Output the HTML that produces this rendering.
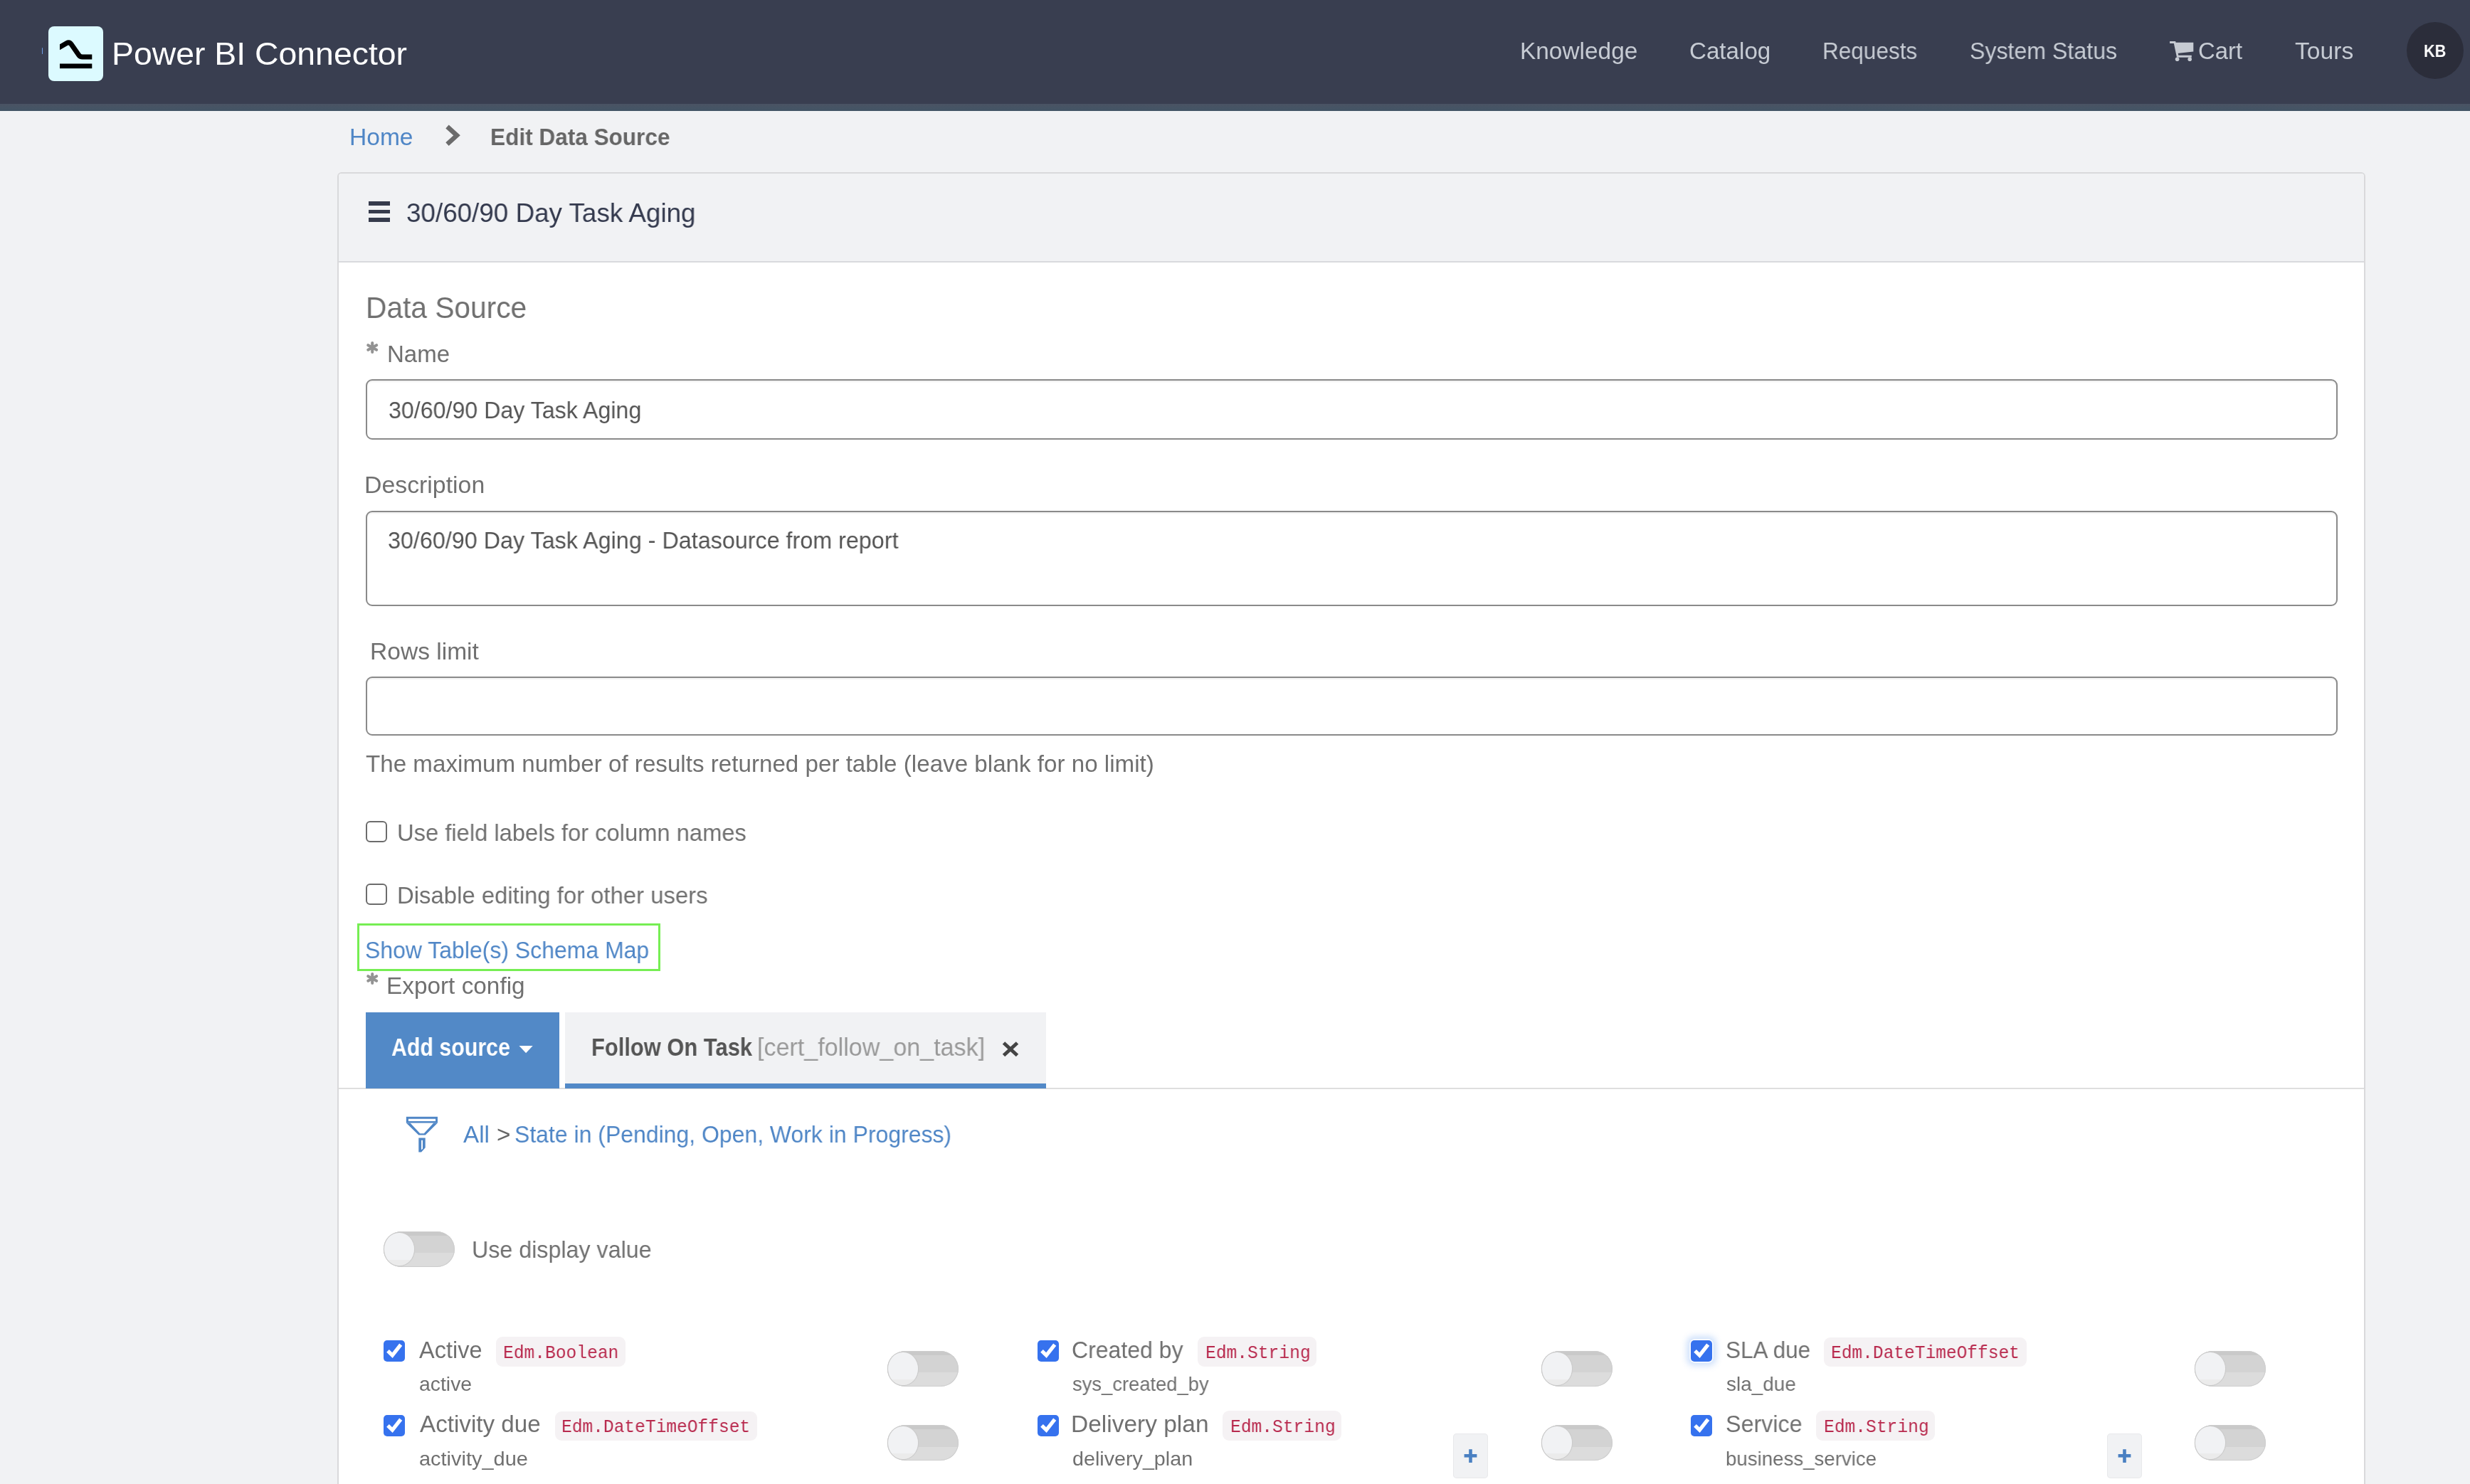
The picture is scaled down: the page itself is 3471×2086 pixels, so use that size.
<!DOCTYPE html><html><head><meta charset="utf-8"><style>
html,body{margin:0;padding:0;width:3471px;height:2086px;overflow:hidden;background:#f1f2f4;font-family:'Liberation Sans',sans-serif}
div,span,svg{position:absolute;box-sizing:border-box}
.t{white-space:nowrap;transform-origin:0 0;will-change:transform}
.tg{width:100px;height:50px;border-radius:25px;background:linear-gradient(#c9c9c9 0,#c9c9c9 12%,#d3d3d3 12%,#d3d3d3 61%,#dcdcdc 61%);box-shadow:inset 0 0 0 1px #cdcdcd}
.kn{left:1px;top:1.8px;width:41.5px;height:46.5px;border-radius:50%;background:linear-gradient(#f1f2f4 0,#f1f2f4 83%,#ebebeb 83%);box-shadow:0 0 0 1.2px #cbcbcb}
.cb{width:30px;height:30px;border-radius:5px;background:#3672ee}
.bd{height:41.5px;border-radius:9px;background:#f5f2f4}
.pl{width:49px;height:62.5px;border-radius:5px;background:#f1f2f4;box-shadow:inset 0 0 0 1px #e8e9eb}
</style></head><body>
<div style="left:0px;top:0px;width:3471px;height:146px;background:#393e50"></div>
<div style="left:0px;top:146px;width:3471px;height:10px;background:linear-gradient(#4a5363,#435566)"></div>
<div style="left:68px;top:37px;width:77px;height:77px;background:#dcfaff;border-radius:8px"></div>
<svg style="left:68px;top:37px" width="77" height="77" viewBox="0 0 77 77"><defs><clipPath id="lc"><rect x="16" y="0" width="45.3" height="77"/></clipPath></defs><path clip-path="url(#lc)" d="M8,33.9 L25.5,23.8 Q29.5,21.5 32.2,25.3 L42.6,40.3 Q44.5,43.1 48,43.1 L62,43.1" fill="none" stroke="#000" stroke-width="7"/><rect x="16" y="52.5" width="45.3" height="6.7" fill="#000"/></svg>
<div style="left:58.6px;top:66.5px;width:1.6px;height:9px;background:#6f9fe6;border-radius:1px"></div>
<div style="left:3382px;top:31px;width:80px;height:80px;background:#2b2d3a;border-radius:50%"></div>
<svg style="left:3044px;top:52px" width="44" height="40" viewBox="0 0 44 40"><polyline points="5.1,7.5 12,7.5 16.2,27.3 35.8,27.3" fill="none" stroke="#c6cbd3" stroke-width="2.9"/><polygon points="12.6,7.8 38.3,7.8 38.3,20.5 15.8,22.9" fill="#c6cbd3"/><circle cx="15.6" cy="31.3" r="2.8" fill="#c6cbd3"/><circle cx="33.2" cy="31.3" r="2.8" fill="#c6cbd3"/></svg>
<svg style="left:620px;top:170px" width="32" height="42" viewBox="0 0 32 42"><polyline points="8.5,8 22,20.3 8.5,32.6" fill="none" stroke="#6b6b6b" stroke-width="6.5" stroke-linejoin="miter" stroke-miterlimit="3"/></svg>
<div style="left:474px;top:242px;width:2850px;height:1900px;background:#fff;border:2px solid #d9d9db;border-radius:6px"></div>
<div style="left:476px;top:244px;width:2846px;height:123px;background:#f1f2f4;border-radius:4px 4px 0 0"></div>
<div style="left:476px;top:367px;width:2846px;height:2px;background:#d9dadd"></div>
<div style="left:518px;top:283px;width:29.5px;height:5.6px;background:#363b4c"></div>
<div style="left:518px;top:294.6px;width:29.5px;height:5.6px;background:#363b4c"></div>
<div style="left:518px;top:306.3px;width:29.5px;height:5.6px;background:#363b4c"></div>
<div style="left:514px;top:533px;width:2771px;height:85px;background:#fff;border:2px solid #8a8a8a;border-radius:9px;box-shadow:inset 0 2px 2px rgba(0,0,0,.055)"></div>
<div style="left:514px;top:718px;width:2771px;height:133.5px;background:#fff;border:2px solid #8a8a8a;border-radius:9px;box-shadow:inset 0 2px 2px rgba(0,0,0,.055)"></div>
<div style="left:514px;top:951px;width:2771px;height:83px;background:#fff;border:2px solid #8a8a8a;border-radius:9px;box-shadow:inset 0 2px 2px rgba(0,0,0,.055)"></div>
<div style="left:514px;top:1154px;width:30px;height:30px;border:2.6px solid #6c6c6c;border-radius:6px;background:#fff"></div>
<div style="left:514px;top:1242px;width:30px;height:30px;border:2.6px solid #6c6c6c;border-radius:6px;background:#fff"></div>
<svg style="left:514.6px;top:480px" width="17" height="17" viewBox="0 0 17 17"><g stroke="#939393" stroke-width="4" stroke-linecap="round"><line x1="8.2" y1="2" x2="8.2" y2="15"/><line x1="2.3" y1="5.2" x2="14.1" y2="11.8"/><line x1="2.3" y1="11.8" x2="14.1" y2="5.2"/></g></svg>
<svg style="left:514.6px;top:1366.5px" width="17" height="17" viewBox="0 0 17 17"><g stroke="#939393" stroke-width="4" stroke-linecap="round"><line x1="8.2" y1="2" x2="8.2" y2="15"/><line x1="2.3" y1="5.2" x2="14.1" y2="11.8"/><line x1="2.3" y1="11.8" x2="14.1" y2="5.2"/></g></svg>
<div style="left:502px;top:1298px;width:426px;height:67px;border:3px solid #76ee53"></div>
<div style="left:476px;top:1528.5px;width:2846px;height:2px;background:#dedede"></div>
<div style="left:514px;top:1423px;width:272px;height:107px;background:#5289c7"></div>
<svg style="left:728px;top:1469px" width="22" height="13" viewBox="0 0 22 13"><polygon points="1.5,1 20.7,1 11.1,11.3" fill="#fff"/></svg>
<div style="left:794px;top:1423px;width:676px;height:107px;background:#f1f2f4"></div>
<div style="left:794px;top:1523px;width:676px;height:7px;background:#5289c7"></div>
<svg style="left:1405px;top:1461px" width="30" height="28" viewBox="0 0 30 28"><g stroke="#444" stroke-width="5"><line x1="5.5" y1="5" x2="24.5" y2="22.5"/><line x1="24.5" y1="5" x2="5.5" y2="22.5"/></g></svg>
<svg style="left:560px;top:1560px" width="80" height="70" viewBox="0 0 80 70"><path fill="#4f86c6" fill-rule="evenodd" d="M10.85,9.7 H54.95 V18.6 H10.85 Z M13.9,12.7 H52.1 V16 H13.9 Z"/><path fill="#4f86c6" fill-rule="evenodd" d="M10.85,18.6 L28.3,35.6 H37.7 L54.95,18.6 Z M16.5,18.6 L30.2,33.3 H35.8 L49.3,18.6 Z"/><path fill="#4f86c6" fill-rule="evenodd" d="M28.3,39.6 H37.7 V53.3 L32.1,59.4 H28.3 Z M32.1,42.7 H34 V54.7 L32.1,56.3 Z"/></svg>
<div class="tg" style="left:539px;top:1731px"><div class="kn"></div></div>
<div class="cb" style="left:539px;top:1884.2px;"><svg style="left:0;top:0" width="30" height="30" viewBox="0 0 30 30"><polyline points="6,14.8 12.4,21.2 24.2,6.2" fill="none" stroke="#fff" stroke-width="5.2"/></svg></div>
<div class="cb" style="left:539px;top:1989.2px;"><svg style="left:0;top:0" width="30" height="30" viewBox="0 0 30 30"><polyline points="6,14.8 12.4,21.2 24.2,6.2" fill="none" stroke="#fff" stroke-width="5.2"/></svg></div>
<div class="cb" style="left:1458px;top:1884.2px;"><svg style="left:0;top:0" width="30" height="30" viewBox="0 0 30 30"><polyline points="6,14.8 12.4,21.2 24.2,6.2" fill="none" stroke="#fff" stroke-width="5.2"/></svg></div>
<div class="cb" style="left:1458px;top:1989.2px;"><svg style="left:0;top:0" width="30" height="30" viewBox="0 0 30 30"><polyline points="6,14.8 12.4,21.2 24.2,6.2" fill="none" stroke="#fff" stroke-width="5.2"/></svg></div>
<div class="cb" style="left:2376px;top:1884.2px;box-shadow:0 0 0 1.5px #fff,0 0 9px 6px rgba(90,150,240,.28);"><svg style="left:0;top:0" width="30" height="30" viewBox="0 0 30 30"><polyline points="6,14.8 12.4,21.2 24.2,6.2" fill="none" stroke="#fff" stroke-width="5.2"/></svg></div>
<div class="cb" style="left:2376px;top:1989.2px;"><svg style="left:0;top:0" width="30" height="30" viewBox="0 0 30 30"><polyline points="6,14.8 12.4,21.2 24.2,6.2" fill="none" stroke="#fff" stroke-width="5.2"/></svg></div>
<div class="tg" style="left:1247px;top:1899px"><div class="kn"></div></div>
<div class="tg" style="left:1247px;top:2003px"><div class="kn"></div></div>
<div class="tg" style="left:2166px;top:1899px"><div class="kn"></div></div>
<div class="tg" style="left:2166px;top:2003px"><div class="kn"></div></div>
<div class="tg" style="left:3084px;top:1899px"><div class="kn"></div></div>
<div class="tg" style="left:3084px;top:2003px"><div class="kn"></div></div>
<div class="bd" style="left:697px;top:1879.2px;width:181.5px"></div>
<div class="bd" style="left:779.5px;top:1983.5px;width:284px"></div>
<div class="bd" style="left:1683px;top:1879.2px;width:166.5px"></div>
<div class="bd" style="left:1718px;top:1983.2px;width:167px"></div>
<div class="bd" style="left:2563px;top:1879.5px;width:285px"></div>
<div class="bd" style="left:2552px;top:1983.2px;width:166.5px"></div>
<div class="pl" style="left:2042px;top:2015px"><svg style="left:0;top:0" width="49" height="62" viewBox="0 0 49 62"><g stroke="#4a80c2" stroke-width="4.6"><line x1="15.6" y1="31.3" x2="33.4" y2="31.3"/><line x1="24.5" y1="22.2" x2="24.5" y2="41"/></g></svg></div>
<div class="pl" style="left:2961px;top:2015px"><svg style="left:0;top:0" width="49" height="62" viewBox="0 0 49 62"><g stroke="#4a80c2" stroke-width="4.6"><line x1="15.6" y1="31.3" x2="33.4" y2="31.3"/><line x1="24.5" y1="22.2" x2="24.5" y2="41"/></g></svg></div>
<div class="t" style="left:156.79px;top:54.00px;font-family:'Liberation Sans', sans-serif;font-size:44.096px;line-height:44.096px;font-weight:400;color:#ffffff;transform:scaleX(1.0521)">Power BI Connector</div>
<div class="t" style="left:2135.55px;top:56.00px;font-family:'Liberation Sans', sans-serif;font-size:32.929px;line-height:32.929px;font-weight:400;color:#c6cbd3;transform:scaleX(1.0152)">Knowledge</div>
<div class="t" style="left:2374.19px;top:56.00px;font-family:'Liberation Sans', sans-serif;font-size:32.929px;line-height:32.929px;font-weight:400;color:#c6cbd3;transform:scaleX(1.0073)">Catalog</div>
<div class="t" style="left:2560.82px;top:56.00px;font-family:'Liberation Sans', sans-serif;font-size:32.929px;line-height:32.929px;font-weight:400;color:#c6cbd3;transform:scaleX(0.9585)">Requests</div>
<div class="t" style="left:2768.25px;top:56.00px;font-family:'Liberation Sans', sans-serif;font-size:32.929px;line-height:32.929px;font-weight:400;color:#c6cbd3;transform:scaleX(0.9761)">System Status</div>
<div class="t" style="left:3088.61px;top:56.00px;font-family:'Liberation Sans', sans-serif;font-size:32.929px;line-height:32.929px;font-weight:400;color:#c6cbd3;transform:scaleX(0.9950)">Cart</div>
<div class="t" style="left:3225.38px;top:56.00px;font-family:'Liberation Sans', sans-serif;font-size:32.929px;line-height:32.929px;font-weight:400;color:#c6cbd3;transform:scaleX(1.0218)">Tours</div>
<div class="t" style="left:3406.13px;top:61.00px;font-family:'Liberation Sans', sans-serif;font-size:23.193px;line-height:23.193px;font-weight:700;color:#ffffff;transform:scaleX(0.9333)">KB</div>
<div class="t" style="left:490.77px;top:176.00px;font-family:'Liberation Sans', sans-serif;font-size:33.215px;line-height:33.215px;font-weight:400;color:#4f86c6;transform:scaleX(1.0107)">Home</div>
<div class="t" style="left:689.30px;top:176.00px;font-family:'Liberation Sans', sans-serif;font-size:33.215px;line-height:33.215px;font-weight:700;color:#666666;transform:scaleX(0.9502)">Edit Data Source</div>
<div class="t" style="left:571.04px;top:281.00px;font-family:'Liberation Sans', sans-serif;font-size:37.510px;line-height:37.510px;font-weight:400;color:#343a4e;transform:scaleX(0.9815)">30/60/90 Day Task Aging</div>
<div class="t" style="left:514.08px;top:412.00px;font-family:'Liberation Sans', sans-serif;font-size:41.805px;line-height:41.805px;font-weight:400;color:#707070;transform:scaleX(0.9736)">Data Source</div>
<div class="t" style="left:543.55px;top:482.00px;font-family:'Liberation Sans', sans-serif;font-size:32.499px;line-height:32.499px;font-weight:400;color:#707070;transform:scaleX(1.0171)">Name</div>
<div class="t" style="left:545.82px;top:561.00px;font-family:'Liberation Sans', sans-serif;font-size:32.929px;line-height:32.929px;font-weight:400;color:#555555;transform:scaleX(0.9775)">30/60/90 Day Task Aging</div>
<div class="t" style="left:512.49px;top:665.00px;font-family:'Liberation Sans', sans-serif;font-size:33.788px;line-height:33.788px;font-weight:400;color:#707070;transform:scaleX(1.0018)">Description</div>
<div class="t" style="left:545.32px;top:744.00px;font-family:'Liberation Sans', sans-serif;font-size:32.929px;line-height:32.929px;font-weight:400;color:#555555;transform:scaleX(0.9815)">30/60/90 Day Task Aging - Datasource from report</div>
<div class="t" style="left:520.24px;top:900.00px;font-family:'Liberation Sans', sans-serif;font-size:32.929px;line-height:32.929px;font-weight:400;color:#707070;transform:scaleX(1.0197)">Rows limit</div>
<div class="t" style="left:513.89px;top:1058.00px;font-family:'Liberation Sans', sans-serif;font-size:32.929px;line-height:32.929px;font-weight:400;color:#707070;transform:scaleX(1.0079)">The maximum number of results returned per table (leave blank for no limit)</div>
<div class="t" style="left:557.72px;top:1155.00px;font-family:'Liberation Sans', sans-serif;font-size:32.929px;line-height:32.929px;font-weight:400;color:#707070;transform:scaleX(0.9941)">Use field labels for column names</div>
<div class="t" style="left:557.70px;top:1243.00px;font-family:'Liberation Sans', sans-serif;font-size:32.929px;line-height:32.929px;font-weight:400;color:#707070;transform:scaleX(0.9986)">Disable editing for other users</div>
<div class="t" style="left:513.16px;top:1320.00px;font-family:'Liberation Sans', sans-serif;font-size:32.929px;line-height:32.929px;font-weight:400;color:#4f86c6;transform:scaleX(0.9715)">Show Table(s) Schema Map</div>
<div class="t" style="left:543.46px;top:1370.00px;font-family:'Liberation Sans', sans-serif;font-size:32.929px;line-height:32.929px;font-weight:400;color:#707070;transform:scaleX(1.0134)">Export config</div>
<div class="t" style="left:550.12px;top:1455.00px;font-family:'Liberation Sans', sans-serif;font-size:34.360px;line-height:34.360px;font-weight:700;color:#ffffff;transform:scaleX(0.8829)">Add source</div>
<div class="t" style="left:830.80px;top:1455.00px;font-family:'Liberation Sans', sans-serif;font-size:34.360px;line-height:34.360px;font-weight:700;color:#555555;transform:scaleX(0.8992)">Follow On Task</div>
<div class="t" style="left:1064.42px;top:1455.00px;font-family:'Liberation Sans', sans-serif;font-size:34.360px;line-height:34.360px;font-weight:400;color:#999999;transform:scaleX(0.9918)">[cert_follow_on_task]</div>
<div class="t" style="left:650.60px;top:1578.00px;font-family:'Liberation Sans', sans-serif;font-size:33.215px;line-height:33.215px;font-weight:400;color:#4f86c6;transform:scaleX(0.9943)">All</div>
<div class="t" style="left:698.45px;top:1578.00px;font-family:'Liberation Sans', sans-serif;font-size:33.215px;line-height:33.215px;font-weight:400;color:#666666;transform:scaleX(0.9750)">></div>
<div class="t" style="left:722.97px;top:1578.00px;font-family:'Liberation Sans', sans-serif;font-size:33.215px;line-height:33.215px;font-weight:400;color:#4f86c6;transform:scaleX(0.9626)">State in (Pending, Open, Work in Progress)</div>
<div class="t" style="left:663.09px;top:1740.00px;font-family:'Liberation Sans', sans-serif;font-size:33.215px;line-height:33.215px;font-weight:400;color:#707070;transform:scaleX(0.9707)">Use display value</div>
<div class="t" style="left:589.20px;top:1882.00px;font-family:'Liberation Sans', sans-serif;font-size:32.499px;line-height:32.499px;font-weight:400;color:#707070;transform:scaleX(1.0000)">Active</div>
<div class="t" style="left:706.65px;top:1889.00px;font-family:'Liberation Mono', monospace;font-size:26.555px;line-height:26.555px;font-weight:400;color:#b8294d;transform:scaleX(0.9263)">Edm.Boolean</div>
<div class="t" style="left:588.99px;top:1932.00px;font-family:'Liberation Sans', sans-serif;font-size:28.061px;line-height:28.061px;font-weight:400;color:#707070;transform:scaleX(1.0113)">active</div>
<div class="t" style="left:589.70px;top:1986.00px;font-family:'Liberation Sans', sans-serif;font-size:32.499px;line-height:32.499px;font-weight:400;color:#707070;transform:scaleX(1.0218)">Activity due</div>
<div class="t" style="left:789.35px;top:1993.00px;font-family:'Liberation Mono', monospace;font-size:26.555px;line-height:26.555px;font-weight:400;color:#b8294d;transform:scaleX(0.9245)">Edm.DateTimeOffset</div>
<div class="t" style="left:588.97px;top:2037.00px;font-family:'Liberation Sans', sans-serif;font-size:28.061px;line-height:28.061px;font-weight:400;color:#707070;transform:scaleX(1.0322)">activity_due</div>
<div class="t" style="left:1506.03px;top:1882.00px;font-family:'Liberation Sans', sans-serif;font-size:32.499px;line-height:32.499px;font-weight:400;color:#707070;transform:scaleX(0.9847)">Created by</div>
<div class="t" style="left:1693.85px;top:1889.00px;font-family:'Liberation Mono', monospace;font-size:26.555px;line-height:26.555px;font-weight:400;color:#b8294d;transform:scaleX(0.9265)">Edm.String</div>
<div class="t" style="left:1507.32px;top:1932.00px;font-family:'Liberation Sans', sans-serif;font-size:28.061px;line-height:28.061px;font-weight:400;color:#707070;transform:scaleX(0.9754)">sys_created_by</div>
<div class="t" style="left:1504.91px;top:1986.00px;font-family:'Liberation Sans', sans-serif;font-size:32.499px;line-height:32.499px;font-weight:400;color:#707070;transform:scaleX(1.0306)">Delivery plan</div>
<div class="t" style="left:1728.85px;top:1993.00px;font-family:'Liberation Mono', monospace;font-size:26.555px;line-height:26.555px;font-weight:400;color:#b8294d;transform:scaleX(0.9265)">Edm.String</div>
<div class="t" style="left:1507.48px;top:2037.00px;font-family:'Liberation Sans', sans-serif;font-size:28.061px;line-height:28.061px;font-weight:400;color:#707070;transform:scaleX(1.0233)">delivery_plan</div>
<div class="t" style="left:2424.66px;top:1882.00px;font-family:'Liberation Sans', sans-serif;font-size:32.499px;line-height:32.499px;font-weight:400;color:#707070;transform:scaleX(0.9697)">SLA due</div>
<div class="t" style="left:2573.45px;top:1889.00px;font-family:'Liberation Mono', monospace;font-size:26.555px;line-height:26.555px;font-weight:400;color:#b8294d;transform:scaleX(0.9238)">Edm.DateTimeOffset</div>
<div class="t" style="left:2426.01px;top:1932.00px;font-family:'Liberation Sans', sans-serif;font-size:28.061px;line-height:28.061px;font-weight:400;color:#707070;transform:scaleX(0.9948)">sla_due</div>
<div class="t" style="left:2425.01px;top:1986.00px;font-family:'Liberation Sans', sans-serif;font-size:32.499px;line-height:32.499px;font-weight:400;color:#707070;transform:scaleX(0.9933)">Service</div>
<div class="t" style="left:2562.95px;top:1993.00px;font-family:'Liberation Mono', monospace;font-size:26.555px;line-height:26.555px;font-weight:400;color:#b8294d;transform:scaleX(0.9265)">Edm.String</div>
<div class="t" style="left:2425.03px;top:2037.00px;font-family:'Liberation Sans', sans-serif;font-size:28.061px;line-height:28.061px;font-weight:400;color:#707070;transform:scaleX(0.9858)">business_service</div>
</body></html>
